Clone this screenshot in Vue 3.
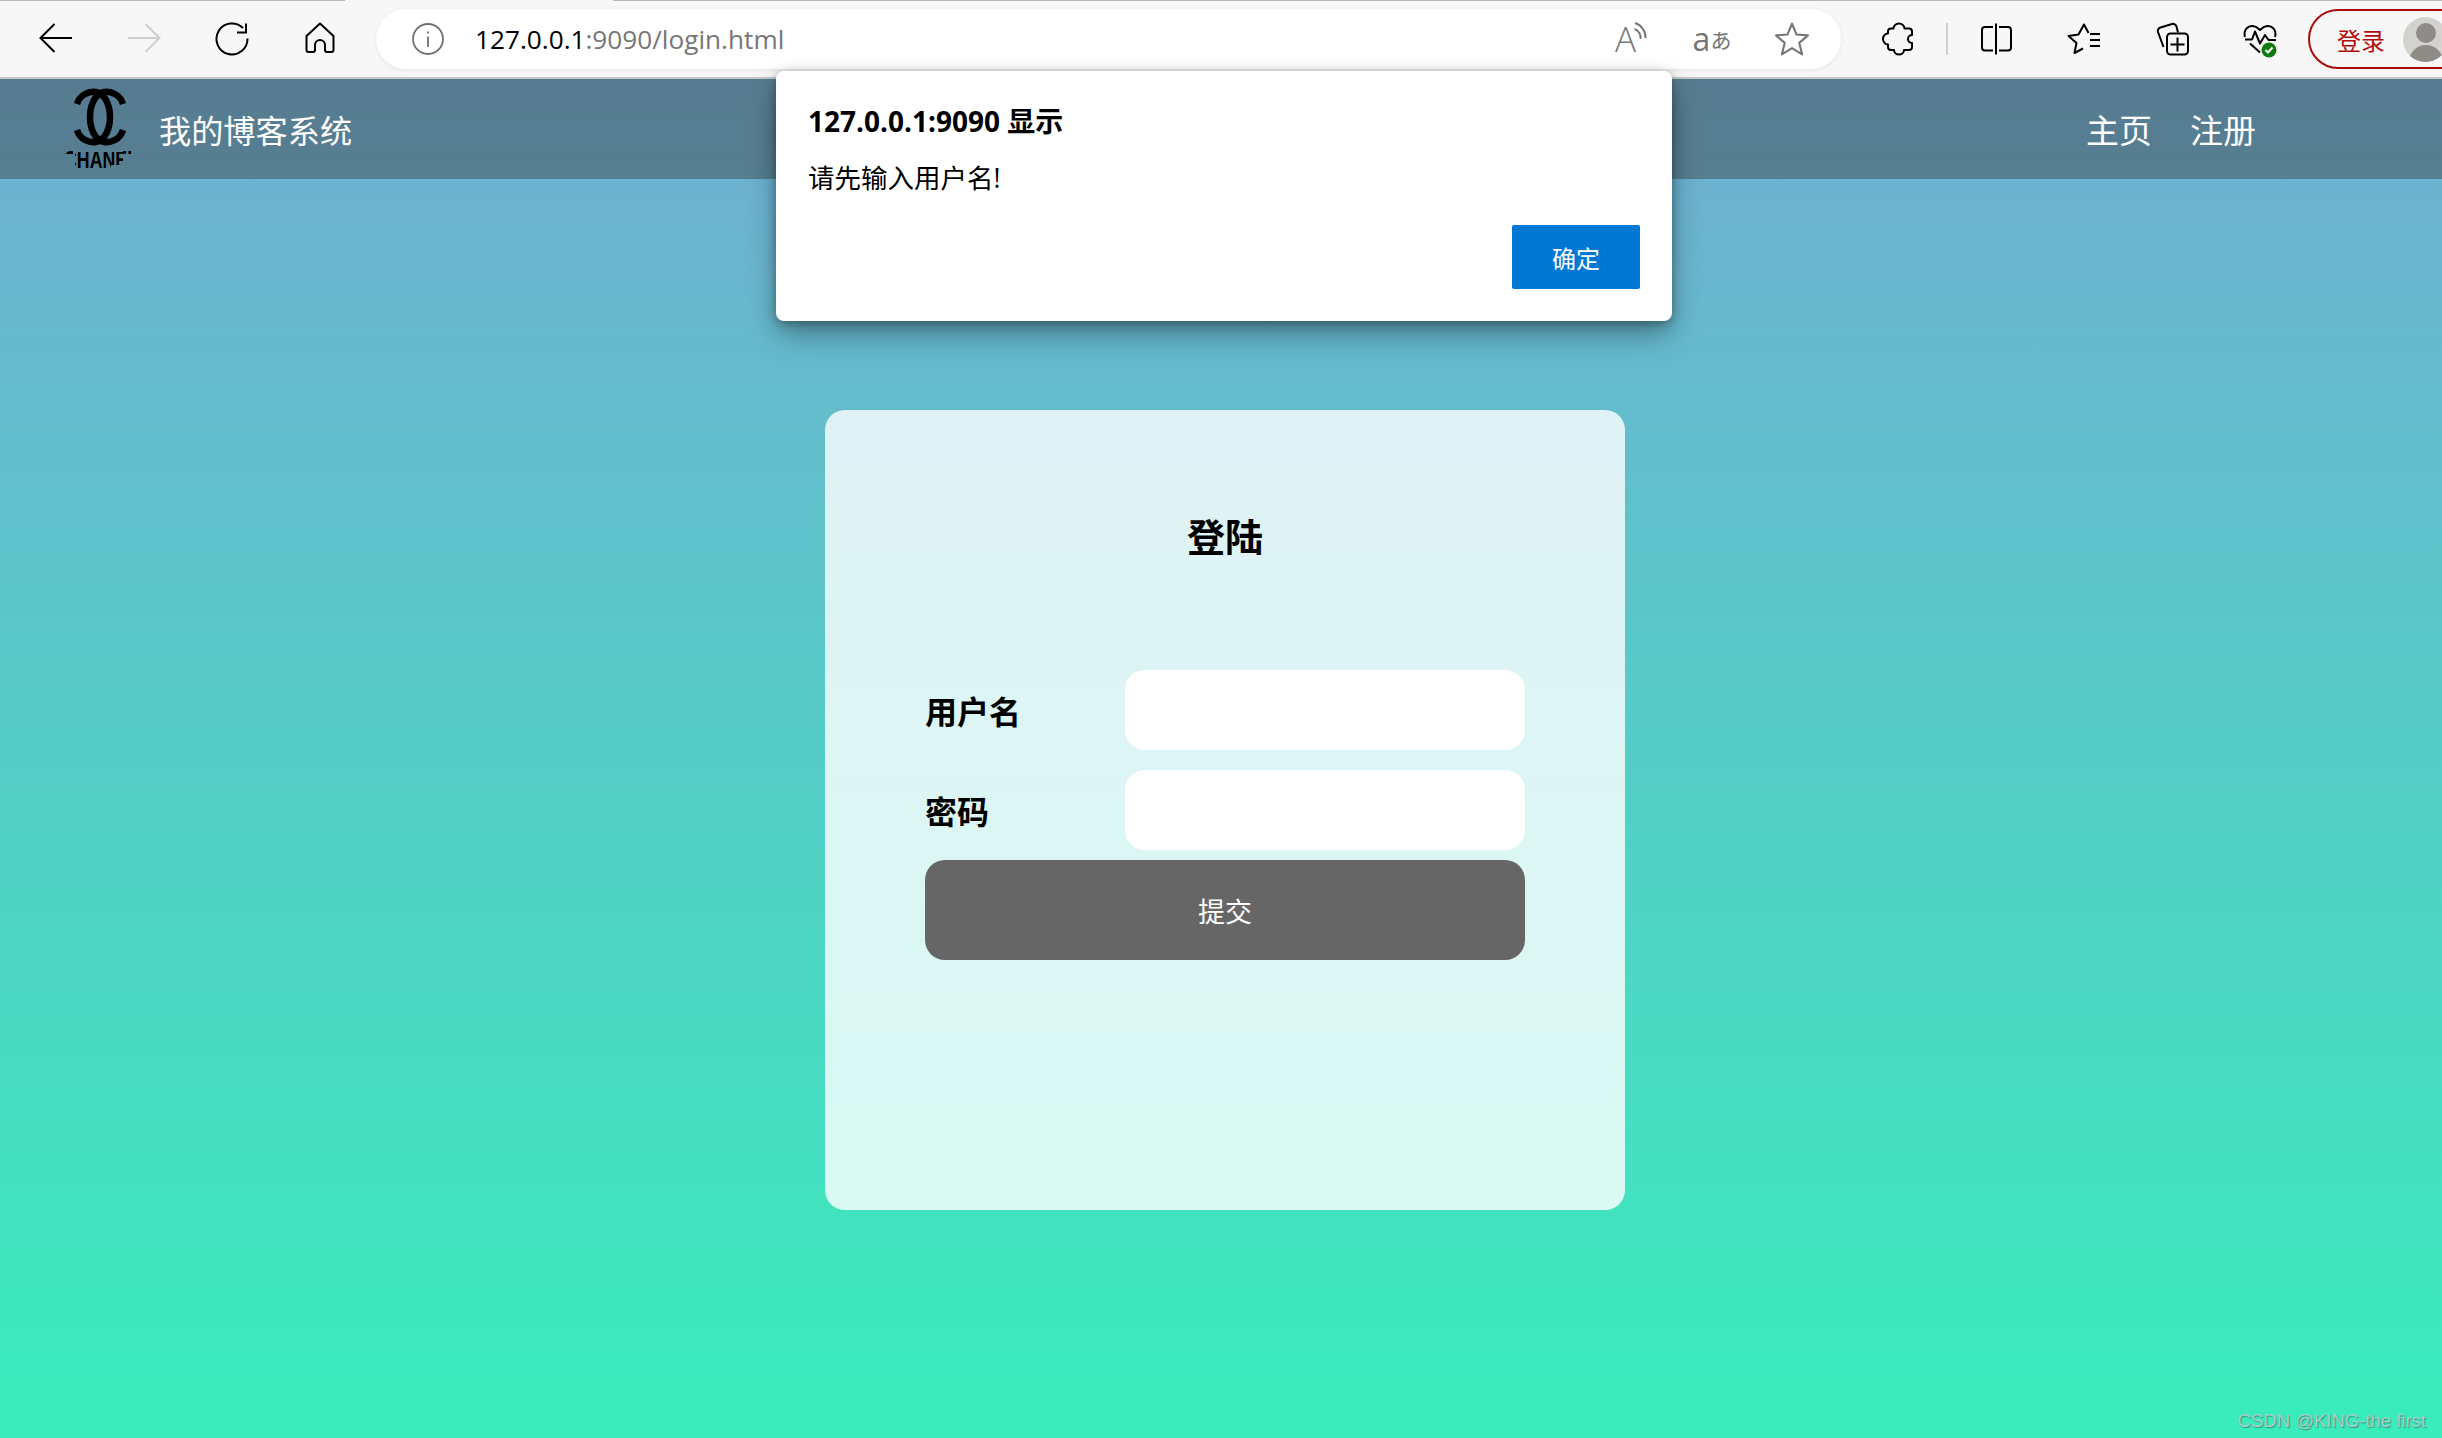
<script setup>
import { ref } from 'vue'

const username = ref('')
const password = ref('')
</script>

<template>
  <div class="window">
    <div class="tabstrip">
      <span class="strip-a"></span>
      <span class="strip-b"></span>
      <span class="strip-c"></span>
    </div>
    <div class="toolbar">
      <div class="slot">
        <svg width="40" height="40" viewBox="0 0 40 40" fill="none" stroke="#000" stroke-width="2">
          <path d="M36 19H5M18.500 5 4.500 19 18.500 33" />
        </svg>
      </div>
      <div class="slot">
        <svg width="40" height="40" viewBox="0 0 40 40" fill="none" stroke="#cfcfcf" stroke-width="2">
          <path d="M4 19h31M21.500 5 35.500 19 21.500 33" />
        </svg>
      </div>
      <div class="slot">
        <svg width="40" height="40" viewBox="0 0 40 40" fill="none" stroke="#000" stroke-width="2">
          <path d="M31 9A15.500 15.500 0 1 0 35.500 19.500" />
          <path d="M34 4.500V13.500H25" />
        </svg>
      </div>
      <div class="slot">
        <svg width="40" height="40" viewBox="0 0 40 40" fill="none" stroke="#000" stroke-width="2" stroke-linejoin="round">
          <path d="M20 4.500 33.500 17V31a2 2 0 0 1-2 2H27a2 2 0 0 1-2-2V26a5 5 0 0 0-10 0v5a2 2 0 0 1-2 2H8.500a2 2 0 0 1-2-2V17Z" />
        </svg>
      </div>

      <div class="address">
        <svg class="info" width="34" height="34" viewBox="0 0 34 34" fill="none" stroke="#6f6f6f" stroke-width="1.800">
          <circle cx="17" cy="17" r="15" />
          <path d="M17 14.500V25M17 9.500v2" />
        </svg>
        <span class="url"><span class="host">127.0.0.1</span>:9090/login.html</span>
        <span class="address-icons">
          <span class="addr-btn read">
            <span class="read-a">A</span>
            <svg width="16" height="22" viewBox="0 0 16 22" fill="none" stroke="#767676" stroke-width="2">
              <path d="M1.500 8A9 9 0 0 1 7.500 18M2 2A15 15 0 0 1 12.500 17" />
            </svg>
          </span>
          <span class="addr-btn trans"><span class="trans-a">a</span><span class="trans-b">あ</span></span>
          <span class="addr-btn">
            <svg width="36" height="36" viewBox="0 0 34 34" fill="none" stroke="#767676" stroke-width="2" stroke-linejoin="round">
              <path d="M17 2.500 21.300 12.800 32 13.600 23.900 20.700 26.500 31.500 17 25.700 7.500 31.500 10.100 20.700 2 13.600 12.700 12.800Z" />
            </svg>
          </span>
        </span>
      </div>

      <div class="slot first-right">
        <svg width="40" height="40" viewBox="0 0 40 40" fill="none" stroke="#000" stroke-width="2" stroke-linejoin="round">
          <path d="M14.500 9.500a5.500 5 0 0 1 11 0H30a3 3 0 0 1 3 3V16a4 4 0 0 0 0 8v4a3 3 0 0 1-3 3h-5a5 4.500 0 0 1-10 0h-3a3 3 0 0 1-3-3v-2.500a5 5.500 0 0 1 0-11V12.500a3 3 0 0 1 3-3Z" />
        </svg>
      </div>
      <span class="divider"></span>
      <div class="slot">
        <svg width="40" height="40" viewBox="0 0 40 40" fill="none" stroke="#000" stroke-width="2" stroke-linejoin="round">
          <path d="M20 4.500v31M17 8H9a3 3 0 0 0-3 3v17.500a3 3 0 0 0 3 3h8M23 8h9a3 3 0 0 1 3 3v17.500a3 3 0 0 1-3 3h-9" />
        </svg>
      </div>
      <div class="slot">
        <svg width="40" height="40" viewBox="0 0 40 40" fill="none" stroke="#000" stroke-width="2" stroke-linejoin="round">
          <path d="M19 29.500 10.500 34 12.500 24 4.500 17 14.500 15.500 20 5.500 24.500 14" />
          <path d="M26 15h10M26 21h10M26 27h10" />
        </svg>
      </div>
      <div class="slot">
        <svg width="40" height="40" viewBox="0 0 40 40" fill="none" stroke="#000" stroke-width="2" stroke-linejoin="round">
          <path d="M11.500 28 6 13a3.500 3.500 0 0 1 2.500-4.500L20 5a3.500 3.500 0 0 1 4.500 2.500L26 13.500" />
          <rect x="15" y="14.500" width="21" height="21" rx="3.500" />
          <path d="M25.500 18.500v14M18.500 25.500h14" />
        </svg>
      </div>
      <div class="slot">
        <svg width="40" height="40" viewBox="0 0 40 40" fill="none" stroke="#000" stroke-width="2" stroke-linejoin="round">
          <path d="M5 18C3 11 8 6.500 13 7c3 .3 5 2 7 4 2-2 4-3.700 7-4 5-.5 10 4 8 11" />
          <path d="M5 20.500h7l3-8 5 12 5-8.500 3.500 5H36" />
          <path d="M10 24.500l10 9" />
          <circle cx="29" cy="31" r="7.500" fill="#107c10" stroke="none" />
          <path d="M25.500 31l2.500 2.500 4.500-5" stroke="#fff" />
        </svg>
      </div>
      <div class="profile">
        <span class="profile-text">登录</span>
        <span class="avatar">
          <svg width="45" height="45" viewBox="0 0 45 45">
            <circle cx="23" cy="16" r="10" fill="#8f8b87" />
            <ellipse cx="23" cy="45" rx="17" ry="17" fill="#8f8b87" />
          </svg>
        </span>
      </div>
    </div>

    <div class="page">
      <div class="nav">
        <svg class="logo" width="100" height="100" viewBox="0 0 100 100" fill="none">
          <defs>
            <clipPath id="logo-clip">
              <rect x="15" y="71" width="8" height="4" />
              <rect x="25" y="73" width="36" height="18" />
              <rect x="61" y="73" width="12" height="13" />
              <rect x="73" y="71" width="14" height="4" />
            </clipPath>
          </defs>
          <g stroke="#000" stroke-width="6.500">
            <path d="M27 25C30 15 40 12 46 13 56 15 60 28 60 38 60 48 56 61 46 63 40 64 30 61 27 51" />
            <path d="M73 25C70 15 60 12 54 13 44 15 40 28 40 38 40 48 44 61 54 63 60 64 70 61 73 51" />
          </g>
          <text class="logo-text" x="14" y="89" textLength="74" lengthAdjust="spacingAndGlyphs" clip-path="url(#logo-clip)">CHANEL</text>
        </svg>
        <span class="brand">我的博客系统</span>
        <span class="spacer"></span>
        <a class="nav-link">主页</a>
        <a class="nav-link">注册</a>
      </div>

      <div class="content">
        <form class="card" @submit.prevent>
          <h3 class="card-title">登陆</h3>
          <div class="row first">
            <span class="label">用户名</span>
            <input v-model="username" class="field" type="text" />
          </div>
          <div class="row">
            <span class="label">密码</span>
            <input v-model="password" class="field" type="password" />
          </div>
          <button class="submit" type="submit">提交</button>
        </form>
      </div>
    </div>

    <div class="dialog">
      <div class="dialog-title">127.0.0.1:9090 显示</div>
      <div class="dialog-msg">请先输入用户名!</div>
      <div class="dialog-actions">
        <button class="dialog-ok" type="button">确定</button>
      </div>
    </div>

    <div class="watermark">CSDN @KING-the first</div>
  </div>
</template>

<style>
html, body {
  margin: 0;
  overflow: hidden;
}
</style>

<style scoped>
.window {
  position: relative;
  width: 2442px;
  height: 1438px;
  overflow: hidden;
  font-family: "Open Sans", "Noto Sans CJK SC", sans-serif;
  background: #fff;
}

.tabstrip {
  display: flex;
  height: 1px;
  background: #f7f7f7;
}

.strip-a { width: 345px; background: #b8b8b8; }
.strip-b { width: 268px; background: #f7f7f7; }
.strip-c { flex: 1; background: #b8b8b8; }

.toolbar {
  display: flex;
  align-items: center;
  height: 76px;
  padding-left: 12px;
  background: #f7f7f7;
  border-bottom: 2px solid #c6c6c6;
  overflow: hidden;
}

.slot {
  flex: none;
  display: flex;
  align-items: center;
  justify-content: center;
  width: 88px;
  height: 60px;
}

.address {
  flex: none;
  display: flex;
  align-items: center;
  width: 1465px;
  height: 60px;
  margin-left: 12px;
  background: #fff;
  border-radius: 30px;
  box-shadow: 0 1px 4px rgba(0, 0, 0, 0.08);
}

.info {
  margin-left: 35px;
}

.url {
  margin-left: 30px;
  font-size: 26.200px;
  color: #767676;
  white-space: nowrap;
  font-family: "Open Sans", sans-serif;
}

.host {
  color: #000;
}

.address-icons {
  display: flex;
  align-items: center;
  margin-left: auto;
  margin-right: 9px;
}

.addr-btn {
  display: flex;
  align-items: center;
  justify-content: center;
  width: 80px;
  height: 40px;
}

.read-a {
  font-size: 35px;
  font-weight: 300;
  line-height: 40px;
  color: #767676;
}

.read svg {
  margin-left: -3px;
  margin-top: -14px;
}

.trans {
  color: #767676;
}

.trans-a {
  font-size: 32px;
  line-height: 40px;
}

.trans-b {
  font-size: 21px;
  line-height: 40px;
  font-family: "Noto Sans CJK JP", sans-serif;
}

.first-right {
  margin-left: 14px;
}

.divider {
  flex: none;
  width: 2px;
  height: 32px;
  margin: 0 4px 0 3px;
  background: #d0d0d0;
}

.profile {
  flex: none;
  display: flex;
  align-items: center;
  width: 170px;
  height: 60px;
  margin-left: 4px;
  box-sizing: border-box;
  border: 2px solid #a80d0d;
  border-radius: 30px;
}

.profile-text {
  margin-left: 27px;
  font-size: 24px;
  color: #b00d0d;
}

.avatar {
  flex: none;
  display: block;
  width: 45px;
  height: 45px;
  margin-left: 18px;
  border-radius: 50%;
  overflow: hidden;
  background: #d3d2ce;
}

.page {
  height: 1359px;
  background: linear-gradient(#71add2, #38edbb);
}

.nav {
  display: flex;
  align-items: center;
  height: 100px;
  padding-left: 50px;
  padding-right: 186px;
  background: rgba(50, 50, 50, 0.4);
  color: #fff;
}

.logo {
  flex: none;
}

.logo-text {
  font-family: "Liberation Sans", sans-serif;
  font-size: 24px;
  font-weight: 700;
  fill: #000;
}

.brand {
  margin-left: 9px;
  font-size: 32.200px;
}

.spacer {
  flex: 1;
}

.nav-link {
  margin-left: 38px;
  font-size: 33px;
  color: #fff;
}

.content {
  display: flex;
  justify-content: center;
  padding-top: 231px;
  padding-left: 8px;
}

.card {
  width: 800px;
  height: 800px;
  box-sizing: border-box;
  padding: 76px 100px 0;
  background: rgba(255, 255, 255, 0.8);
  border-radius: 20px;
}

.card-title {
  margin: 0;
  font-size: 38px;
  line-height: 100px;
  font-weight: 700;
  text-align: center;
}

.row {
  display: flex;
  align-items: center;
  height: 80px;
  margin-top: 20px;
}

.row.first {
  margin-top: 84px;
}

.label {
  width: 200px;
  font-size: 32px;
  font-weight: 700;
}

.field {
  width: 400px;
  height: 80px;
  box-sizing: border-box;
  border: none;
  border-radius: 20px;
  background: #fff;
  outline: none;
}

.submit {
  display: block;
  width: 600px;
  height: 100px;
  margin-top: 10px;
  border: none;
  border-radius: 20px;
  background: #666;
  color: #fff;
  font-family: inherit;
  font-size: 27px;
}

.dialog {
  position: absolute;
  left: 776px;
  top: 71px;
  width: 896px;
  height: 250px;
  box-sizing: border-box;
  padding: 32px 32px 0;
  background: #fff;
  border-radius: 8px;
  box-shadow: 0 14px 30px -2px rgba(0, 0, 0, 0.38), 0 2px 10px rgba(0, 0, 0, 0.3);
}

.dialog-title {
  font-size: 28px;
  font-weight: 700;
  line-height: 36px;
  color: #000;
}

.dialog-msg {
  margin-top: 21px;
  font-size: 26.500px;
  line-height: 36px;
  color: #000;
}

.dialog-actions {
  display: flex;
  justify-content: flex-end;
  margin-top: 29px;
}

.dialog-ok {
  width: 128px;
  height: 64px;
  border: none;
  border-radius: 2px;
  background: #0078d4;
  color: #fff;
  font-family: inherit;
  font-size: 24px;
}

.watermark {
  position: absolute;
  right: 16px;
  bottom: 6px;
  font-family: "Liberation Sans", sans-serif;
  font-size: 18.500px;
  color: #a9cfc6;
  text-shadow: 1px 1px 1px rgba(40, 90, 80, 0.6);
}
</style>
